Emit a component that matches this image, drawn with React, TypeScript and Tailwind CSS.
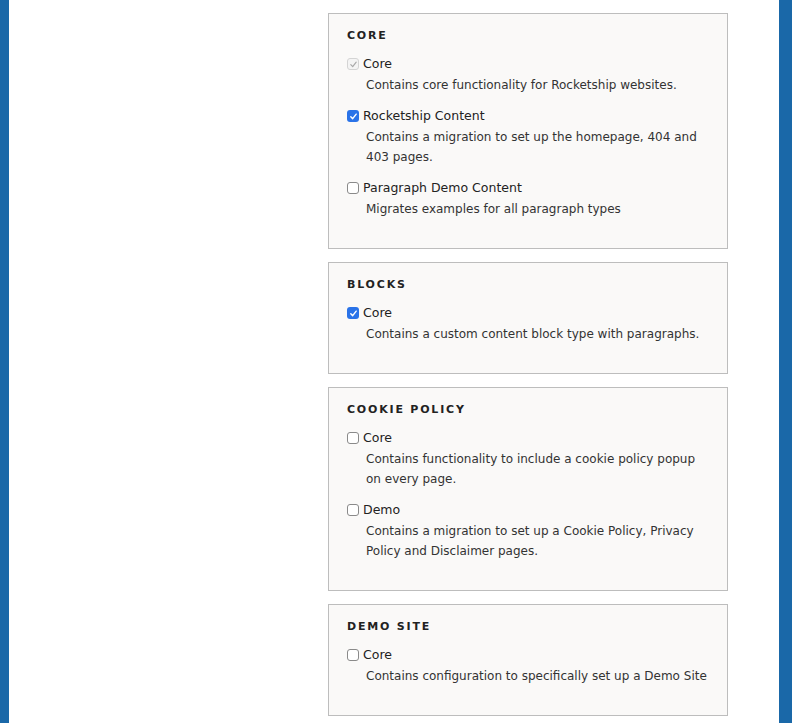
import { FC } from "react";

type Option = {
    label: string;
    description: string;
    state: "checked" | "unchecked" | "disabled";
};

type Group = {
    title: string;
    options: Option[];
};

const groups: Group[] = [
    {
        title: "Core",
        options: [
            { label: "Core", description: "Contains core functionality for Rocketship websites.", state: "disabled" },
            { label: "Rocketship Content", description: "Contains a migration to set up the homepage, 404 and 403 pages.", state: "checked" },
            { label: "Paragraph Demo Content", description: "Migrates examples for all paragraph types", state: "unchecked" },
        ],
    },
    {
        title: "Blocks",
        options: [
            { label: "Core", description: "Contains a custom content block type with paragraphs.", state: "checked" },
        ],
    },
    {
        title: "Cookie Policy",
        options: [
            { label: "Core", description: "Contains functionality to include a cookie policy popup on every page.", state: "unchecked" },
            { label: "Demo", description: "Contains a migration to set up a Cookie Policy, Privacy Policy and Disclaimer pages.", state: "unchecked" },
        ],
    },
    {
        title: "Demo Site",
        options: [
            { label: "Core", description: "Contains configuration to specifically set up a Demo Site", state: "unchecked" },
        ],
    },
];

const Checkbox: FC<{ state: Option["state"] }> = ({ state }) => {
    if (state === "checked") {
        return (
            <span className="flex h-[12px] w-[12px] items-center justify-center rounded-[3px] bg-[#2a73e8]">
                <svg width="9" height="9" viewBox="0 0 10 10" fill="none">
                    <path d="M2 5.2 L4.1 7.4 L8 2.4" stroke="white" strokeWidth="1.6" strokeLinecap="round" strokeLinejoin="round" />
                </svg>
            </span>
        );
    }
    if (state === "disabled") {
        return (
            <span className="flex h-[12px] w-[12px] items-center justify-center rounded-[3px] border border-[#d4d4d4] bg-[#f4f4f4]">
                <svg width="9" height="9" viewBox="0 0 10 10" fill="none">
                    <path d="M2 5.2 L4.1 7.4 L8 2.4" stroke="#a8a8a8" strokeWidth="1.3" strokeLinecap="round" strokeLinejoin="round" />
                </svg>
            </span>
        );
    }
    return <span className="block h-[12px] w-[12px] rounded-[3px] border border-[#8a8a8a] bg-white" />;
};

const Fieldset: FC<{ group: Group }> = ({ group }) => (
    <div className="w-[400px] border border-[#bdbdbd] bg-[#faf9f8] pb-[29px] pl-[18px] pr-[16px] pt-[12px]">
        <h2 className="text-[11px] font-bold uppercase leading-[20px] tracking-[1.8px] text-[#222]">{group.title}</h2>
        <div className="mt-[8px] flex flex-col gap-[11px]">
            {group.options.map((opt, i) => (
                <div key={i}>
                    <div className="flex items-center gap-[4px]">
                        <Checkbox state={opt.state} />
                        <span className="text-[12.5px] leading-[20px] text-[#222]">{opt.label}</span>
                    </div>
                    <p className="mt-[1px] pl-[19px] text-[12px] leading-[20px] text-[#333]">{opt.description}</p>
                </div>
            ))}
        </div>
    </div>
);

export default function App() {
    return (
        <div className="flex min-h-[723px] w-full bg-white font-['DejaVu_Sans',sans-serif]">
            <div className="w-[9px] shrink-0 bg-[#1a68a8]" />
            <div className="flex flex-1 pt-[13px]">
                <div className="w-[319px] shrink-0" />
                <div className="flex flex-col gap-[13px]">
                    {groups.map((g) => (
                        <Fieldset key={g.title} group={g} />
                    ))}
                </div>
            </div>
            <div className="w-[13px] shrink-0 bg-[#1a68a8]" />
        </div>
    );
}
